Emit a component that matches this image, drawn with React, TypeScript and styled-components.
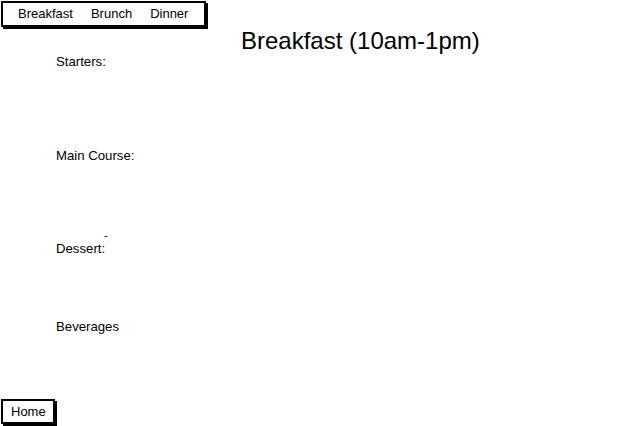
import React from 'react';
import styled, { createGlobalStyle } from 'styled-components';

const GlobalStyle = createGlobalStyle`
  html, body {
    margin: 0;
    padding: 0;
    background: #fff;
  }
  body {
    font-family: "Liberation Sans", Arial, sans-serif;
    color: #000;
  }
`;

const Page = styled.div`
  display: flex;
  flex-direction: column;
  align-items: flex-start;
  min-height: 426px;
  box-sizing: border-box;
  padding: 1px 0 2px 1px;
`;

const NavBar = styled.nav`
  display: flex;
  gap: 18px;
  border: 2px solid #000;
  box-shadow: 2px 2px 0 #000;
  padding: 3px 16px 4px 15px;
  font-size: 13px;
  line-height: 15px;
  background: #fff;
`;

const NavLink = styled.span`
  cursor: pointer;
`;

const Title = styled.h1`
  margin: 0 0 0 240px;
  font-size: 24px;
  line-height: 27px;
  font-weight: normal;
`;

const Menu = styled.div`
  display: flex;
  flex-direction: column;
  padding-left: 55px;
`;

const Section = styled.section<{ space: number }>`
  display: flex;
  flex-direction: column;
  height: ${p => p.space}px;
`;

const Label = styled.div`
  font-size: 13.2px;
  line-height: 15px;
`;

const Dash = styled.div`
  font-size: 11px;
  line-height: 12px;
  padding-left: 48px;
`;

const HomeButton = styled.button`
  margin-top: auto;
  margin-left: 0;
  border: 2px solid #000;
  box-shadow: 2px 2px 0 #000;
  background: #fff;
  font-family: inherit;
  font-size: 13px;
  line-height: 15px;
  padding: 3px 7px 3px 8px;
  color: #000;
  cursor: pointer;
`;

const sections = [
  { label: 'Starters:', space: 94 },
  { label: 'Main Course:', space: 81, dash: true },
  { label: 'Dessert:', space: 78 },
  { label: 'Beverages', space: 20 },
];

export default function App() {
  return (
    <>
      <GlobalStyle />
      <Page>
        <NavBar>
          <NavLink>Breakfast</NavLink>
          <NavLink>Brunch</NavLink>
          <NavLink>Dinner</NavLink>
        </NavBar>
        <Title>Breakfast (10am-1pm)</Title>
        <Menu>
          {sections.map(s => (
            <React.Fragment key={s.label}>
              <Section space={s.space}>
                <Label>{s.label}</Label>
              </Section>
              {s.dash && <Dash>-</Dash>}
            </React.Fragment>
          ))}
        </Menu>
        <HomeButton>Home</HomeButton>
      </Page>
    </>
  );
}
